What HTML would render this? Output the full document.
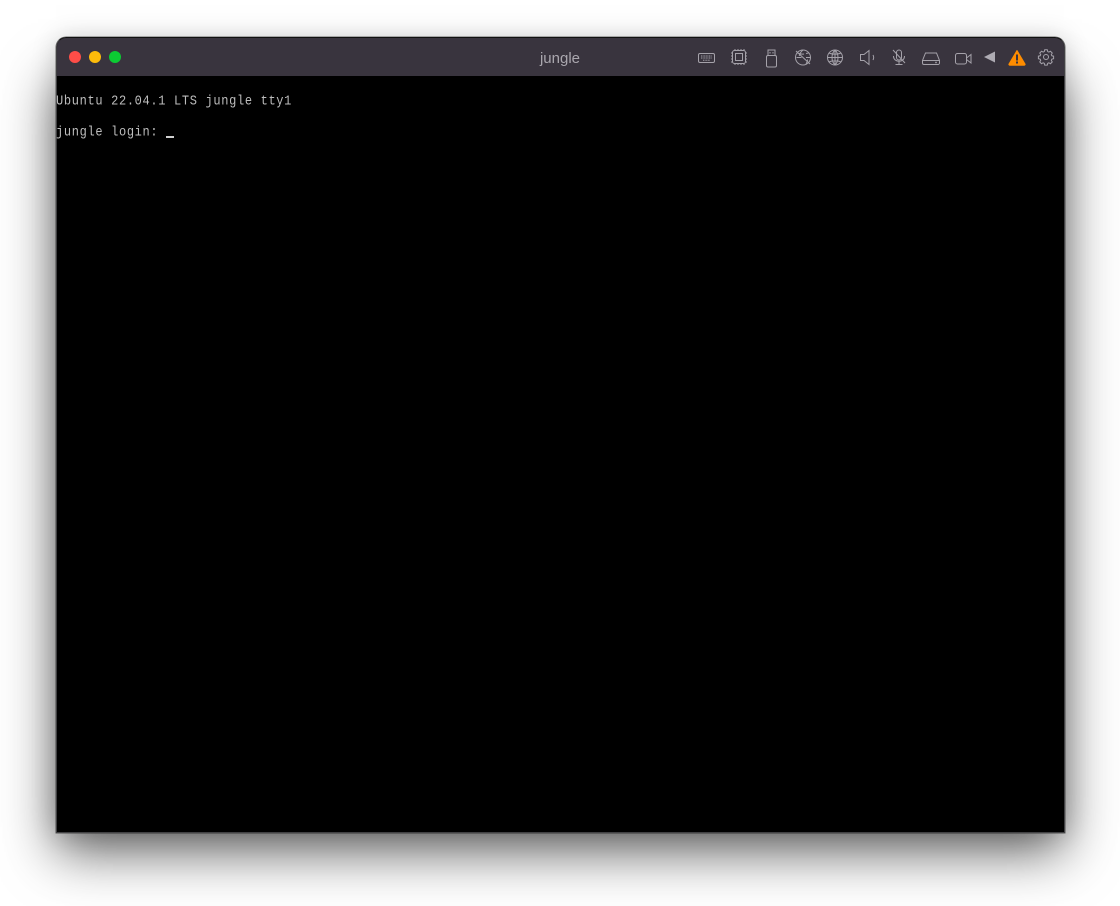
<!DOCTYPE html>
<html><head><meta charset="utf-8"><title>jungle</title>
<style>
html,body{margin:0;padding:0;width:1120px;height:906px;background:#fff;overflow:hidden}
#shadow1{position:absolute;left:56px;top:60px;width:1008px;height:772px;box-shadow:0 20px 50px rgba(0,0,0,.62)}
#win{position:absolute;left:56px;top:37px;width:1008.5px;height:796px;box-sizing:border-box;background:#000;border:1px solid #414143;border-top-color:#111;border-radius:10px 10px 0 0;overflow:hidden}
#frame{position:absolute;left:56px;top:37px;width:1008.5px;height:796px;box-sizing:border-box;border-radius:10px 10px 0 0;box-shadow:0 0 0 .5px rgba(0,0,0,.55),0 0 26px rgba(0,0,0,.16)}
#bar{position:absolute;left:0;top:0;right:0;height:38px;background:#39343e}
.t{position:absolute;font-family:"Liberation Mono",monospace;font-size:12px;line-height:16px;letter-spacing:.667px;color:#bdbdbd;white-space:pre;transform:scaleY(1.14);transform-origin:0 50%}
#title{position:absolute;left:0;width:1120px;top:50px;text-align:center;font:15px/18px "Liberation Sans",sans-serif;color:#aaa7ae}
#cursor{position:absolute;left:166px;top:136px;width:8px;height:2px;background:#d0d0d0}
svg{position:absolute;left:0;top:0}
</style></head><body>
<div id="shadow1"></div>
<div id="frame"></div>
<div id="win"><div id="bar"></div></div>
<div id="title">jungle</div>
<div class="t" style="left:56px;top:93px">Ubuntu 22.04.1 LTS jungle tty1</div>
<div class="t" style="left:56px;top:124px">jungle login:</div>
<div id="cursor"></div>
<svg width="1120" height="906" viewBox="0 0 1120 906">
<circle cx="75" cy="57" r="6" fill="#fe4d48"/><circle cx="95" cy="57" r="6" fill="#fdbb0b"/><circle cx="115" cy="57" r="6" fill="#0ccb33"/>
<g fill="none" stroke="#a5a2aa" stroke-width="1">
<rect x="698.5" y="53.5" width="16" height="9" rx="1.5"/>
<path d="M701 56h11M701 58h11M703 60.2h7" stroke-dasharray="1 .6"/>
<rect x="732.5" y="50.5" width="13" height="13" rx="2"/><rect x="735.5" y="53.5" width="7" height="7"/>
<path d="M735 49v1.500M738 49v1.500M741 49v1.500M744 49v1.500M735 63.500v1.500M738 63.500v1.500M741 63.500v1.500M744 63.500v1.500M731 53h1.500M731 56h1.500M731 59h1.500M731 62h1.500M745.500 53h1.500M745.500 56h1.500M745.500 59h1.500M745.500 62h1.500"/>
<rect x="766.500" y="55.500" width="10" height="11.500" rx="1.500"/><path d="M768 55.500v-5.500h7v5.500M770 52v1.500M773 52v1.500"/>
<circle cx="803" cy="57.500" r="7.500"/><path d="M796 51l14 13M796.500 57.500h5M806 57.500h4M803 50c-2.500 2-3.500 4-3.800 6M806 64c1-1.500 1.500-3 1.600-4.500M797.500 53c2 1 4.500 1.300 6.500 1M806 53.500l2.500-.5"/>
<circle cx="835" cy="57.500" r="7.500"/><path d="M827.500 57.500h15M835 50v15M835 50c-4 4-4 11 0 15M835 50c4 4 4 11 0 15M829 53c3 1.500 9 1.500 12 0M829 62c3-1.500 9-1.500 12 0"/>
<path d="M860.500 54.500h3.500l5-4v14l-5-4h-3.500z"/><path d="M873 55c.8 1.500.8 3.500 0 5"/>
<rect x="896.500" y="50" width="5" height="10" rx="2.500"/><path d="M893.500 56c0 7 11 7 11 0M899 61v3.500M895.500 64.500h7M893 50l12 13"/>
<path d="M922.500 60.500l3-7.500h11l3 7.500M922.500 60.500v2.500a1.500 1.500 0 0 0 1.500 1.500h14a1.500 1.500 0 0 0 1.500-1.500v-2.500z"/><circle cx="936" cy="62.500" r=".4"/>
<rect x="955.500" y="53.500" width="11" height="10.500" rx="2"/><path d="M966.500 58l4.500-3.500v8.500l-4.500-3.500"/>
<circle cx="1046" cy="57" r="2.500"/>
<path vector-effect="non-scaling-stroke" transform="translate(1046 57) scale(.8) translate(-1046 -57) translate(0 -1.500)" d="M1044.400 49.500h3.200l.5 2.200 1.500.7 2-1.100 2.200 2.300-1.200 1.900.7 1.500 2.200.5v3.200l-2.200.5-.7 1.500 1.200 1.900-2.200 2.300-2-1.100-1.500.7-.5 2.200h-3.200l-.5-2.200-1.500-.7-2 1.100-2.200-2.300 1.200-1.900-.7-1.500-2.200-.5v-3.200l2.200-.5.700-1.500-1.200-1.900 2.200-2.300 2 1.100 1.500-.7z"/>
</g>
<path d="M984 57l11-5.500v11z" fill="#aeabb3"/>
<path d="M1017 50.500l8 13.500a.8.8 0 0 1-.7 1.200h-14.600a.8.8 0 0 1-.7-1.200z" fill="#fe8c00" stroke="#fe8c00" stroke-linejoin="round"/>
<rect x="1016" y="54.500" width="2" height="6" fill="#39343e"/><rect x="1016" y="61.500" width="2" height="2" fill="#39343e"/>
</svg>
</body></html>
